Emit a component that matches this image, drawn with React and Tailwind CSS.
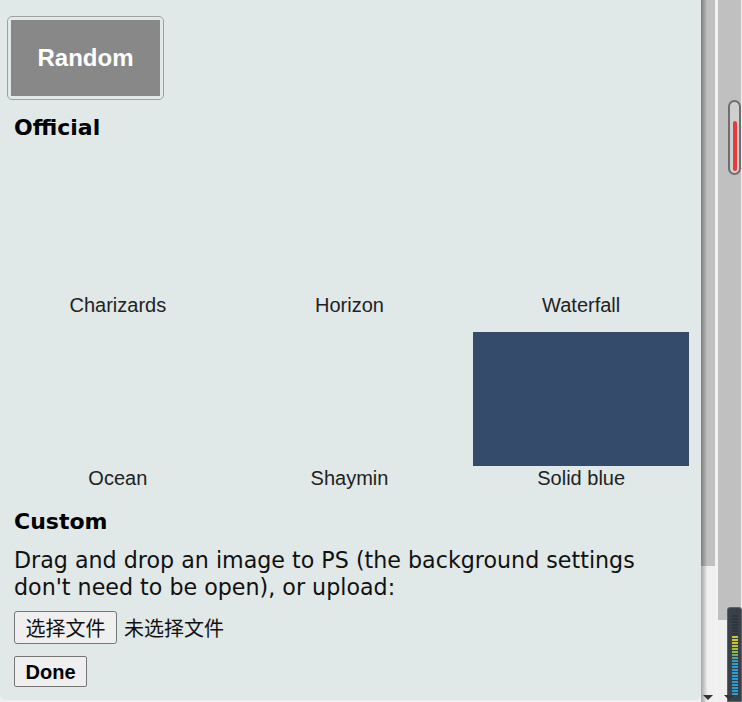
import React from 'react';

const backgrounds = [
  { name: 'Charizards' },
  { name: 'Horizon' },
  { name: 'Waterfall' },
  { name: 'Ocean' },
  { name: 'Shaymin' },
  { name: 'Solid blue', color: '#344b6c' },
];

// LED meter segments, top to bottom
const ledColors = [
  ...Array(7).fill('#2c3643'),
  '#cdc62a', '#cdc62a', '#c6c42e', '#bcc236', '#a8bc42', '#94b64e', '#72ac66', '#5aa584',
  ...Array(12).fill('#2b9bd3'),
];

const App = () => {
  return (
    <div className="flex h-[702px] w-[742px] overflow-hidden bg-[#f0f0f0]">
      {/* Popup panel */}
      <div className="h-[700px] w-[701px] flex-none overflow-hidden rounded-b-[5px] bg-[#e0e8e8] pl-[14px] pr-[12px]">
        <div className="-ml-[7px] mt-[16px] h-[84px] w-[157px] rounded-[5px] border border-[#a0a0a0] p-[3px]">
          <div className="flex h-full w-full items-center justify-center bg-[#888888] font-['Liberation_Sans',Arial,sans-serif] text-[24px] font-bold text-white">
            Random
          </div>
        </div>

        <h3 className="mt-[14px] font-['DejaVu_Sans',Verdana,sans-serif] text-[22px] font-bold leading-[28px] text-black">
          Official
        </h3>

        <div className="-ml-[12px] mt-[17px] grid w-[695px] grid-cols-3 gap-y-[15px]">
          {backgrounds.map((bg) => (
            <div key={bg.name} className="flex flex-col items-center">
              <div
                className="h-[134px] w-[216px]"
                style={bg.color ? { backgroundColor: bg.color } : undefined}
              />
              <span className="font-['Liberation_Sans',Arial,sans-serif] text-[20px] leading-[24px] text-[#222]">
                {bg.name}
              </span>
            </div>
          ))}
        </div>

        <h3 className="mt-[18px] font-['DejaVu_Sans',Verdana,sans-serif] text-[22px] font-bold leading-[28px] text-black">
          Custom
        </h3>
        <p className="mt-[11px] font-['DejaVu_Sans',Verdana,sans-serif] text-[22.2px] leading-[27px] text-[#111]">
          Drag and drop an image to PS (the background settings don't need to be open), or upload:
        </p>

        <div className="mt-[10px] flex items-center font-['Noto_Sans_CJK_SC',sans-serif] text-[20px] text-[#111]">
          <button className="h-[33px] w-[103px] rounded-[3px] border border-[#767676] bg-[#efefef] leading-none">
            选择文件
          </button>
          <span className="ml-[7px]">未选择文件</span>
        </div>

        <button className="mt-[12px] h-[31px] w-[73px] rounded-[2px] border border-[#767676] bg-[#efefef] font-['Liberation_Sans',Arial,sans-serif] text-[20px] font-bold leading-none text-black">
          Done
        </button>
      </div>

      {/* Right side scroll area */}
      <div className="relative flex h-full flex-1">
        <div className="flex w-[6px] flex-col">
          <div className="h-[566px] bg-gradient-to-r from-[#7f7f7f] to-[#bdbdbd]" />
          <div className="flex-1 bg-gradient-to-r from-[#a6a6a6] to-[#ebebeb]" />
        </div>
        <div className="flex w-[8px] flex-col">
          <div className="h-[566px] bg-[#c0c0c0]" />
          <div className="flex-1 bg-[#f0f0f0]" />
        </div>
        <div className="w-[3px] bg-[#f2f2f2]" />
        <div className="flex w-[23px] flex-col">
          <div className="h-[620px] bg-[#c0c0c0]" />
        </div>

        {/* thumb */}
        <div className="absolute left-[27px] top-[100px] flex h-[75px] w-[13px] justify-center rounded-full border-2 border-[#6e6e6e] bg-[#cfcfcf]">
          <div className="mt-[19px] h-[50px] w-[4px] rounded-full bg-[#e8393b]" />
        </div>

        {/* meter */}
        <div className="absolute left-[26px] top-[607px] flex h-[95px] w-[15px] justify-center rounded-t-[3px] border border-[#5b626b] bg-[#3a4048] pt-[7px]">
          <div className="flex w-[6px] flex-col gap-[1px]">
            {ledColors.map((c, i) => (
              <div key={i} className="h-[2px] w-full" style={{ backgroundColor: c }} />
            ))}
          </div>
        </div>

        {/* arrows */}
        <div className="absolute left-[2px] top-[695px] h-0 w-0 border-l-[5px] border-r-[5px] border-t-[5px] border-l-transparent border-r-transparent border-t-[#333]" />
        <div className="absolute left-[23px] top-[695px] h-0 w-0 border-l-[5px] border-r-[5px] border-t-[5px] border-l-transparent border-r-transparent border-t-[#333]" />
      </div>
    </div>
  );
};

export default App;
